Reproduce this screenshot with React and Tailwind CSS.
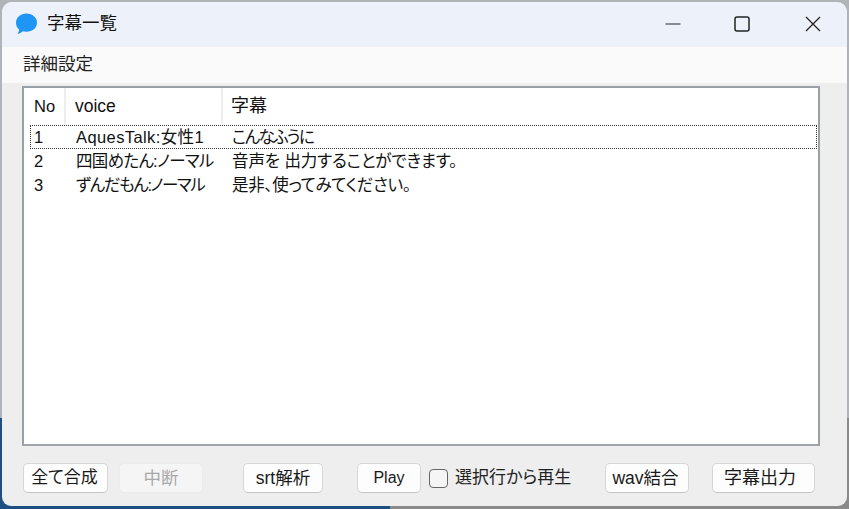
const font = { fontFamily: '"Liberation Sans","Noto Sans CJK JP",sans-serif' };

function Btn({ w, children, disabled, size = "text-[17.5px]" }) {
  return (
    <div className={`h-[30px] flex items-center justify-center rounded-[5px] ${size} ${disabled ? "bg-[#f5f5f5] border border-[#ececec] text-[#a8a8a8]" : "bg-[#fdfdfd] border border-[#d6d6d6] border-b-[#c4c4c4] text-[#1a1a1a]"} ${w}`}>
      {children}
    </div>
  );
}

function Row({ no, voice, text, voiceT, textT, selected }) {
  return (
    <div className={`ml-[6px] mr-[1px] flex items-center h-[24px] text-[16.5px] leading-none text-[#111] ${selected ? "border border-dotted border-[#333]" : "border border-transparent"}`}>
      <div className="w-[45px] pl-[3px]">{no}</div>
      <div className={`w-[156px] whitespace-nowrap ${voiceT}`}>{voice}</div>
      <div className={`flex-1 whitespace-nowrap ${textT}`}>{text}</div>
    </div>
  );
}

export default function App() {
  return (
    <div style={font} className="[font-feature-settings:'palt'] w-[849px] h-[509px] overflow-hidden bg-[linear-gradient(180deg,#b0b4b8_0,#b0b4b8_418px,transparent_418px),linear-gradient(90deg,#1d4f82_390px,#8a8a8a_390px)] pt-[2px] pl-[2px] pr-[2px] pb-[3px]">
      <div className="h-[504px] w-[845px] rounded-t-[10px] rounded-b-[9px] overflow-hidden bg-[#eeeeee] flex flex-col">
        <div className="h-[45px] shrink-0 bg-[#edf2fa] flex items-center pl-[13px] pb-[2px]">
          <svg width="23" height="23" viewBox="0 0 23 23" className="shrink-0">
            <path d="M11.5 1.5C17.3 1.5 22 5.500 22 10.700c0 5.200-4.700 9-10.500 9-1.300 0-2.500-.2-3.600-.5-1.200 1-2.900 2.200-5.500 2.600 1-1.200 1.700-2.600 1.800-4.300C2 15.800 1 13.500 1 10.700 1 5.500 5.700 1.500 11.500 1.500Z" fill="#1f96f3" />
          </svg>
          <div className="ml-[9px] text-[17.5px] text-[#111]">字幕一覧</div>
          <div className="ml-auto flex items-center">
            <svg width="16" height="16" viewBox="0 0 16 16" className="mr-[53px]"><path d="M0.500 8H15.500" stroke="#222" strokeWidth="1" /></svg>
            <svg width="16" height="16" viewBox="0 0 16 16" className="mr-[55px]"><rect x="1" y="1" width="14" height="14" rx="2" fill="none" stroke="#222" strokeWidth="1.500" /></svg>
            <svg width="16" height="16" viewBox="0 0 16 16" className="mr-[26px]"><path d="M1 1L15 15M15 1L1 15" stroke="#222" strokeWidth="1.300" /></svg>
          </div>
        </div>
        <div className="h-[36px] shrink-0 bg-[#fafafa] flex items-center pl-[21px] pb-[2px] text-[17.5px] text-[#222]">詳細設定</div>
        <div className="ml-[20px] mr-[27px] mt-[3px] h-[360px] shrink-0 bg-white border-2 border-[#9aa0a6] border-b-[#a0a4a8] flex flex-col">
          <div className="h-[37px] shrink-0 flex items-center text-[#111]">
            <div className="w-[42px] h-full flex items-center pl-[10px] border-r-2 border-[#eeeeee] text-[16.5px]">No</div>
            <div className="w-[157px] h-full flex items-center pl-[9px] border-r-2 border-[#eeeeee] text-[17.5px]">voice</div>
            <div className="pl-[8px] text-[18px]">字幕</div>
          </div>
          <Row no="1" voice="AquesTalk:女性1" text="こんなふうに" voiceT="tracking-[0.4px]" textT="tracking-[-1.6px]" selected />
          <Row no="2" voice="四国めたん:ノーマル" text="音声を 出力することができます。" voiceT="tracking-[-0.7px]" textT="tracking-[-0.1px]" />
          <Row no="3" voice="ずんだもん:ノーマル" text="是非、使ってみてください。" voiceT="tracking-[-1.4px]" textT="tracking-[-0.3px]" />
        </div>
        <div className="flex items-center mt-[17px] pl-[21px]">
          <Btn w="w-[85px] pr-[2px]" size="text-[17px]">全て合成</Btn>
          <div className="w-[11px]" />
          <Btn w="w-[84px]" disabled>中断</Btn>
          <div className="w-[40px]" />
          <Btn w="w-[80px]">srt解析</Btn>
          <div className="w-[34px]" />
          <Btn w="w-[64px]" size="text-[16px]">Play</Btn>
          <div className="w-[8px]" />
          <div className="w-[19px] h-[19px] rounded-[4px] border border-[#666] bg-[#f5f5f5]" />
          <div className="ml-[7px] w-[117px] whitespace-nowrap text-[17px] text-[#222]">選択行から再生</div>
          <div className="w-[33px]" />
          <Btn w="w-[84px] pr-[3px]">wav結合</Btn>
          <div className="w-[23px]" />
          <Btn w="w-[103px] pr-[7px]" size="text-[18px]">字幕出力</Btn>
        </div>
      </div>
    </div>
  );
}
